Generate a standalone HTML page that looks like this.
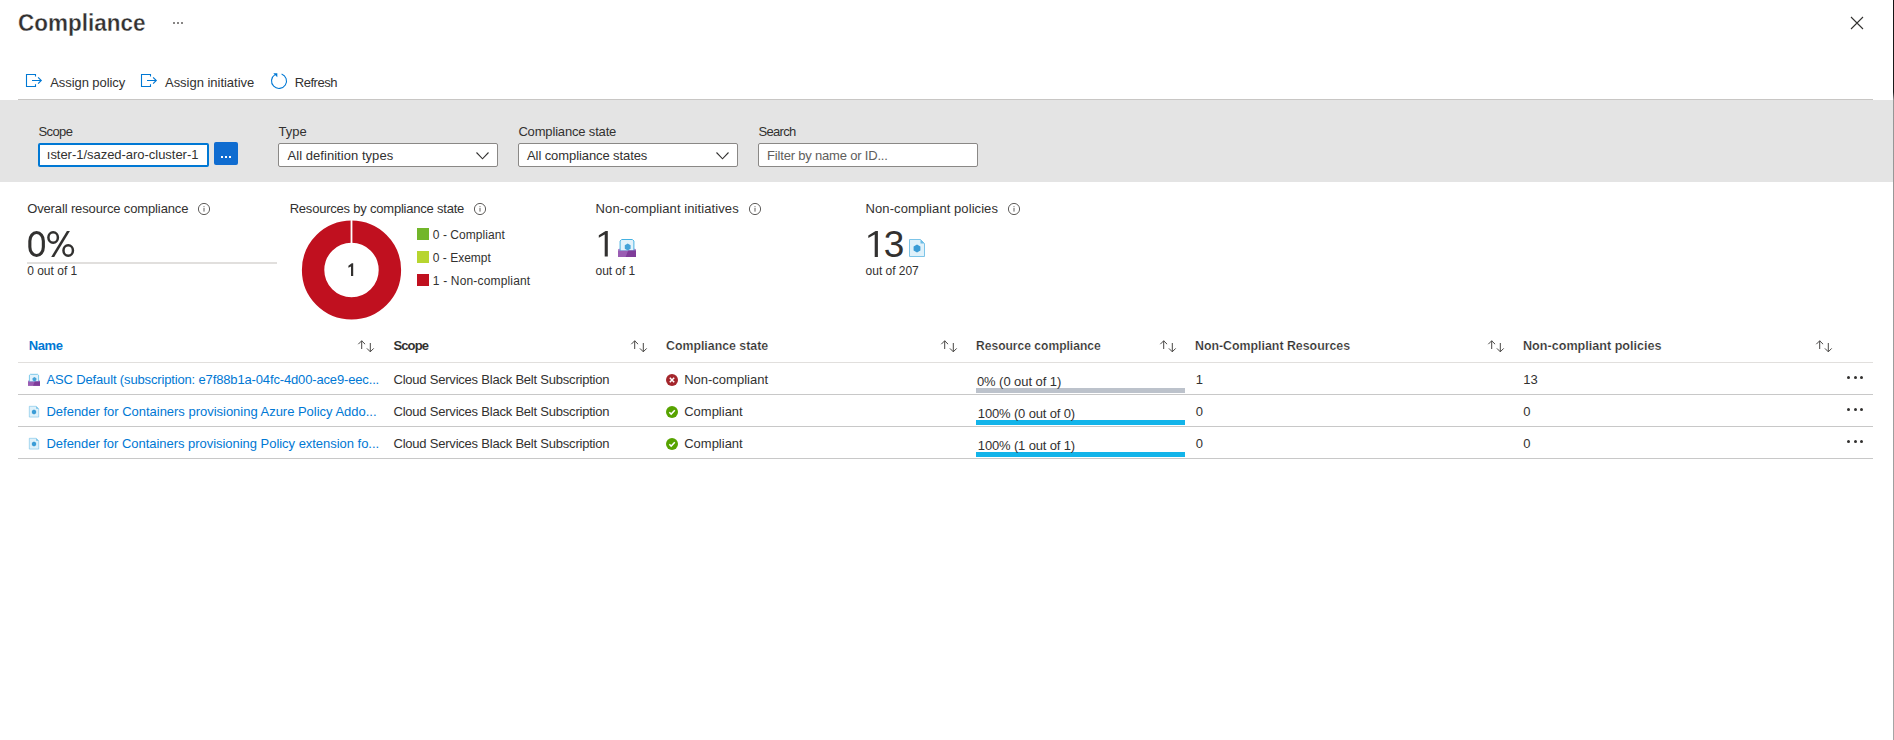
<!DOCTYPE html>
<html><head><meta charset="utf-8">
<style>
html,body{margin:0;padding:0;background:#fff;}
body{width:1894px;height:740px;position:relative;overflow:hidden;font-family:"Liberation Sans",sans-serif;color:#323130;}
.a{position:absolute;white-space:nowrap;line-height:1;}
.b{position:absolute;}
svg{position:absolute;overflow:visible;}
</style></head>
<body>
<!-- title dots -->
<div class="b" style="left:173px;top:22px;width:2px;height:2px;background:#605e5c;border-radius:1px;"></div>
<div class="b" style="left:177px;top:22px;width:2px;height:2px;background:#605e5c;border-radius:1px;"></div>
<div class="b" style="left:181px;top:22px;width:2px;height:2px;background:#605e5c;border-radius:1px;"></div>
<!-- close -->
<svg style="left:1850px;top:16px" width="14" height="14" viewBox="0 0 14 14"><path d="M1 1L13 13M13 1L1 13" stroke="#323130" stroke-width="1.1" fill="none"/></svg>
<!-- right edge -->
<div class="b" style="left:1893px;top:0;width:1px;height:740px;background:linear-gradient(#141414 0,#1a1a1a 92px,#959595 100px,#a5a5a5 740px);"></div>

<!-- toolbar icons -->
<svg style="left:24px;top:70px" width="20" height="20" viewBox="0 0 20 20"><path d="M11.5 6.6V4.5H2.5V16.5H11.5V14.3M8 10.5H17.2M14.1 7.3L17.3 10.5L14.1 13.7" stroke="#0078d4" stroke-width="1.1" fill="none"/></svg>
<svg style="left:139px;top:70px" width="20" height="20" viewBox="0 0 20 20"><path d="M11.5 6.6V4.5H2.5V16.5H11.5V14.3M8 10.5H17.2M14.1 7.3L17.3 10.5L14.1 13.7" stroke="#0078d4" stroke-width="1.1" fill="none"/></svg>
<svg style="left:269px;top:71px" width="20" height="20" viewBox="0 0 20 20"><path d="M12.6 2.9A7.5 7.5 0 1 1 6 3.6" stroke="#0078d4" stroke-width="1.1" fill="none"/><path d="M4.3 2.2H8.3V6.2Z" fill="#0078d4"/></svg>

<div class="b" style="left:18px;top:99px;width:1855px;height:1px;background:#c8c6c4;"></div>
<!-- filter panel -->
<div class="b" style="left:0;top:100px;width:1893px;height:82px;background:#e4e4e4;"></div>
<!-- scope input -->
<div class="b" style="left:38px;top:143px;width:167px;height:20px;border:2px solid #0078d4;border-radius:2px;background:#fff;"></div>
<div class="b" style="left:214px;top:142px;width:24px;height:23px;background:#0f6cd0;border-radius:2px;"></div>
<div class="b" style="left:221px;top:156px;width:2px;height:2px;background:#fff;"></div>
<div class="b" style="left:225px;top:156px;width:2px;height:2px;background:#fff;"></div>
<div class="b" style="left:229px;top:156px;width:2px;height:2px;background:#fff;"></div>
<!-- dropdowns -->
<div class="b" style="left:278px;top:143px;width:218px;height:22px;border:1px solid #8a8886;border-radius:2px;background:#fff;"></div>
<svg style="left:476px;top:152px" width="13" height="8" viewBox="0 0 13 8"><path d="M0.5 0.5L6.5 6.8L12.5 0.5" stroke="#323130" stroke-width="1.1" fill="none"/></svg>
<div class="b" style="left:518px;top:143px;width:218px;height:22px;border:1px solid #8a8886;border-radius:2px;background:#fff;"></div>
<svg style="left:716px;top:152px" width="13" height="8" viewBox="0 0 13 8"><path d="M0.5 0.5L6.5 6.8L12.5 0.5" stroke="#323130" stroke-width="1.1" fill="none"/></svg>
<div class="b" style="left:758px;top:143px;width:218px;height:22px;border:1px solid #8a8886;border-radius:2px;background:#fff;"></div>

<!-- metrics -->
<!-- info icons -->
<svg style="left:197px;top:202px" width="14" height="14" viewBox="0 0 14 14"><circle cx="7" cy="7" r="5.6" stroke="#605e5c" stroke-width="1" fill="none"/><rect x="6.5" y="6" width="1" height="3.6" fill="#605e5c"/><rect x="6.5" y="4.2" width="1" height="1" fill="#605e5c"/></svg>
<svg style="left:473px;top:202px" width="14" height="14" viewBox="0 0 14 14"><circle cx="7" cy="7" r="5.6" stroke="#605e5c" stroke-width="1" fill="none"/><rect x="6.5" y="6" width="1" height="3.6" fill="#605e5c"/><rect x="6.5" y="4.2" width="1" height="1" fill="#605e5c"/></svg>
<svg style="left:748px;top:202px" width="14" height="14" viewBox="0 0 14 14"><circle cx="7" cy="7" r="5.6" stroke="#605e5c" stroke-width="1" fill="none"/><rect x="6.5" y="6" width="1" height="3.6" fill="#605e5c"/><rect x="6.5" y="4.2" width="1" height="1" fill="#605e5c"/></svg>
<svg style="left:1007px;top:202px" width="14" height="14" viewBox="0 0 14 14"><circle cx="7" cy="7" r="5.6" stroke="#605e5c" stroke-width="1" fill="none"/><rect x="6.5" y="6" width="1" height="3.6" fill="#605e5c"/><rect x="6.5" y="4.2" width="1" height="1" fill="#605e5c"/></svg>
<div class="b" style="left:27px;top:262px;width:250px;height:2px;background:#e1dfdd;"></div>
<!-- donut -->
<svg style="left:301px;top:220px" width="101" height="101" viewBox="0 0 101 101"><circle cx="50.5" cy="50" r="38.4" stroke="#c0101f" stroke-width="22.4" fill="none"/><rect x="49.6" y="0" width="1.8" height="24" fill="#fff"/></svg>
<div class="b" style="left:417px;top:228px;width:12px;height:12px;background:#72b62a;"></div>
<div class="b" style="left:417px;top:251px;width:12px;height:12px;background:#b7d52f;"></div>
<div class="b" style="left:417px;top:274px;width:12px;height:12px;background:#c0101f;"></div>
<!-- initiative icon -->
<svg style="left:618px;top:239px" width="18" height="18" viewBox="0 0 18 18" preserveAspectRatio="none">
<path d="M0 10.2L1.2 9.8H16.8L18 10.2V18H0Z" fill="#b585c9"/>
<path d="M3.6 0.5H14.4L15.9 2V12H2.1V2Z" fill="#e2f2fb" stroke="#45b1e1" stroke-width="1"/>
<path d="M9.7 4.6L12.6 6.3V9.7L9.7 11.4L6.8 9.7V6.3Z" fill="#43a2d8"/>
<path d="M0 11.6H18V18H0Z" fill="#9a5db3"/>
<path d="M7.6 18L10.2 11.6H18V18Z" fill="#7f3c99"/>
</svg>
<!-- policy icon -->
<svg style="left:909px;top:239px" width="16" height="18" viewBox="0 0 16 18" preserveAspectRatio="none">
<path d="M0.5 0.5H11.5L15.5 4.5V17.5H0.5Z" fill="#dff1fa" stroke="#7cc4e8" stroke-width="1"/>
<path d="M11.5 0.5V4.5H15.5Z" fill="#6cbde6"/>
<path d="M8 5.6L11.4 7.6V11.4L8 13.4L4.6 11.4V7.6Z" fill="#3b9cd6"/>
</svg>

<svg style="left:0;top:0" width="1894" height="740" viewBox="0 0 1894 740">
<rect x="29.85" y="232.45" width="13.5" height="23.1" rx="6.75" ry="8.5" stroke="#323130" stroke-width="3.1" fill="none"/>
<ellipse cx="53.15" cy="237.45" rx="4.75" ry="5.25" stroke="#323130" stroke-width="2.5" fill="none"/>
<ellipse cx="68.2" cy="250.55" rx="4.75" ry="5.25" stroke="#323130" stroke-width="2.5" fill="none"/>
<path d="M51.2 256.9H54.2L69.9 231.1H66.9Z" fill="#323130"/>
<path d="M607.8 230.9V256.6H604.7V234.6L598.8 237.8V235.3L605.6 230.9Z" fill="#323130"/>
<path d="M877.9 230.9V256.9H874.7V234.6L868.3 238V235.6L875.6 230.9Z" fill="#323130"/>
<path d="M353.2 263.3V275.9H351V266.4L348.4 267.8V265.7L351.8 263.3Z" fill="#323130"/>
</svg>
<!-- table -->
<div class="b" style="left:18px;top:362px;width:1855px;height:1px;background:#e1dfdd;"></div>
<div class="b" style="left:18px;top:394px;width:1855px;height:1px;background:#c8c8c8;"></div>
<div class="b" style="left:18px;top:426px;width:1855px;height:1px;background:#c8c8c8;"></div>
<div class="b" style="left:18px;top:458px;width:1855px;height:1px;background:#c8c8c8;"></div>
<svg style="left:358px;top:340px" width="17" height="13" viewBox="0 0 17 13"><path d="M3.7 0.8V9M0.3 4.2L3.7 0.8L7.1 4.2M12.3 3V11.8M8.9 8.4L12.3 11.8L15.7 8.4" stroke="#484644" stroke-width="1" fill="none"/></svg>
<svg style="left:631px;top:340px" width="17" height="13" viewBox="0 0 17 13"><path d="M3.7 0.8V9M0.3 4.2L3.7 0.8L7.1 4.2M12.3 3V11.8M8.9 8.4L12.3 11.8L15.7 8.4" stroke="#484644" stroke-width="1" fill="none"/></svg>
<svg style="left:941px;top:340px" width="17" height="13" viewBox="0 0 17 13"><path d="M3.7 0.8V9M0.3 4.2L3.7 0.8L7.1 4.2M12.3 3V11.8M8.9 8.4L12.3 11.8L15.7 8.4" stroke="#484644" stroke-width="1" fill="none"/></svg>
<svg style="left:1160px;top:340px" width="17" height="13" viewBox="0 0 17 13"><path d="M3.7 0.8V9M0.3 4.2L3.7 0.8L7.1 4.2M12.3 3V11.8M8.9 8.4L12.3 11.8L15.7 8.4" stroke="#484644" stroke-width="1" fill="none"/></svg>
<svg style="left:1488px;top:340px" width="17" height="13" viewBox="0 0 17 13"><path d="M3.7 0.8V9M0.3 4.2L3.7 0.8L7.1 4.2M12.3 3V11.8M8.9 8.4L12.3 11.8L15.7 8.4" stroke="#484644" stroke-width="1" fill="none"/></svg>
<svg style="left:1816px;top:340px" width="17" height="13" viewBox="0 0 17 13"><path d="M3.7 0.8V9M0.3 4.2L3.7 0.8L7.1 4.2M12.3 3V11.8M8.9 8.4L12.3 11.8L15.7 8.4" stroke="#484644" stroke-width="1" fill="none"/></svg>
<svg style="left:666px;top:374px" width="12" height="12" viewBox="0 0 12 12"><circle cx="6" cy="6" r="6" fill="#a4262c"/><path d="M3.8 3.8L8.2 8.2M8.2 3.8L3.8 8.2" stroke="#fff" stroke-width="1.5"/></svg>
<svg style="left:666px;top:406px" width="12" height="12" viewBox="0 0 12 12"><circle cx="6" cy="6" r="6" fill="#57a300"/><path d="M3.3 6.2L5.2 8.1L8.8 4.3" stroke="#fff" stroke-width="1.5" fill="none"/></svg>
<svg style="left:666px;top:438px" width="12" height="12" viewBox="0 0 12 12"><circle cx="6" cy="6" r="6" fill="#57a300"/><path d="M3.3 6.2L5.2 8.1L8.8 4.3" stroke="#fff" stroke-width="1.5" fill="none"/></svg>
<svg style="left:28px;top:374.2px" width="12" height="11.8" viewBox="0 0 18 18" preserveAspectRatio="none">
<path d="M0 10.2L1.2 9.8H16.8L18 10.2V18H0Z" fill="#b585c9"/>
<path d="M3.6 0.5H14.4L15.9 2V12H2.1V2Z" fill="#e2f2fb" stroke="#45b1e1" stroke-width="1"/>
<path d="M9.7 4.6L12.6 6.3V9.7L9.7 11.4L6.8 9.7V6.3Z" fill="#43a2d8"/>
<path d="M0 11.6H18V18H0Z" fill="#9a5db3"/>
<path d="M7.6 18L10.2 11.6H18V18Z" fill="#7f3c99"/>
</svg>
<svg style="left:29px;top:406.4px" width="10" height="11.4" viewBox="0 0 16 18" preserveAspectRatio="none">
<path d="M0.5 0.5H11.5L15.5 4.5V17.5H0.5Z" fill="#dff1fa" stroke="#7cc4e8" stroke-width="1"/>
<path d="M11.5 0.5V4.5H15.5Z" fill="#6cbde6"/>
<path d="M8 5.6L11.4 7.6V11.4L8 13.4L4.6 11.4V7.6Z" fill="#3b9cd6"/>
</svg>
<svg style="left:29px;top:438.4px" width="10" height="11.4" viewBox="0 0 16 18" preserveAspectRatio="none">
<path d="M0.5 0.5H11.5L15.5 4.5V17.5H0.5Z" fill="#dff1fa" stroke="#7cc4e8" stroke-width="1"/>
<path d="M11.5 0.5V4.5H15.5Z" fill="#6cbde6"/>
<path d="M8 5.6L11.4 7.6V11.4L8 13.4L4.6 11.4V7.6Z" fill="#3b9cd6"/>
</svg>
<div class="b" style="left:1847px;top:376.0px;width:3px;height:3px;border-radius:50%;background:#323130;"></div><div class="b" style="left:1853.5px;top:376.0px;width:3px;height:3px;border-radius:50%;background:#323130;"></div><div class="b" style="left:1860px;top:376.0px;width:3px;height:3px;border-radius:50%;background:#323130;"></div>
<div class="b" style="left:1847px;top:408.0px;width:3px;height:3px;border-radius:50%;background:#323130;"></div><div class="b" style="left:1853.5px;top:408.0px;width:3px;height:3px;border-radius:50%;background:#323130;"></div><div class="b" style="left:1860px;top:408.0px;width:3px;height:3px;border-radius:50%;background:#323130;"></div>
<div class="b" style="left:1847px;top:440.0px;width:3px;height:3px;border-radius:50%;background:#323130;"></div><div class="b" style="left:1853.5px;top:440.0px;width:3px;height:3px;border-radius:50%;background:#323130;"></div><div class="b" style="left:1860px;top:440.0px;width:3px;height:3px;border-radius:50%;background:#323130;"></div>
<div class="b" style="left:976px;top:388px;width:209px;height:5px;background:#bcc2cb;"></div>
<div class="b" style="left:976px;top:420px;width:209px;height:5px;background:#12b4ea;"></div>
<div class="b" style="left:976px;top:452px;width:209px;height:5px;background:#12b4ea;"></div>

<div class="a" style="left:18.3px;top:11.26px;font-size:24.5px;font-weight:700;transform:scaleX(0.918);transform-origin:0 0;-webkit-text-stroke:0.35px #fff;">Compliance</div>
<div class="a" style="left:50.2px;top:76.00px;font-size:13px;letter-spacing:-0.067px;">Assign policy</div>
<div class="a" style="left:165.0px;top:76.00px;font-size:13px;letter-spacing:-0.024px;">Assign initiative</div>
<div class="a" style="left:294.8px;top:76.00px;font-size:13px;letter-spacing:-0.490px;">Refresh</div>
<div class="a" style="left:38.4px;top:125.00px;font-size:13px;letter-spacing:-0.575px;">Scope</div>
<div class="a" style="left:278.6px;top:125.00px;font-size:13px;">Type</div>
<div class="a" style="left:518.4px;top:125.00px;font-size:13px;letter-spacing:-0.166px;">Compliance state</div>
<div class="a" style="left:758.4px;top:125.00px;font-size:13px;letter-spacing:-0.667px;">Search</div>
<div class="a" style="left:46.8px;top:148.00px;font-size:13px;letter-spacing:-0.032px;">ıster-1/sazed-aro-cluster-1</div>
<div class="a" style="left:287.5px;top:149.00px;font-size:13px;letter-spacing:0.046px;">All definition types</div>
<div class="a" style="left:527.0px;top:149.00px;font-size:13px;letter-spacing:-0.087px;">All compliance states</div>
<div class="a" style="left:767.1px;top:149.00px;font-size:13px;color:#605e5c;letter-spacing:-0.191px;">Filter by name or ID...</div>
<div class="a" style="left:27.2px;top:202.30px;font-size:13px;letter-spacing:-0.135px;">Overall resource compliance</div>
<div class="a" style="left:289.7px;top:202.30px;font-size:13px;letter-spacing:-0.216px;">Resources by compliance state</div>
<div class="a" style="left:595.6px;top:202.30px;font-size:13px;letter-spacing:0.092px;">Non-compliant initiatives</div>
<div class="a" style="left:865.6px;top:202.30px;font-size:13px;letter-spacing:0.074px;">Non-compliant policies</div>
<div class="a" style="left:883.8px;top:225.88px;font-size:37px;">3</div>
<div class="a" style="left:27.2px;top:264.84px;font-size:12px;">0 out of 1</div>
<div class="a" style="left:595.6px;top:264.84px;font-size:12px;letter-spacing:-0.079px;">out of 1</div>
<div class="a" style="left:865.6px;top:264.84px;font-size:12px;letter-spacing:-0.029px;">out of 207</div>
<div class="a" style="left:432.8px;top:228.84px;font-size:12px;letter-spacing:0.056px;">0 - Compliant</div>
<div class="a" style="left:432.8px;top:251.84px;font-size:12px;">0 - Exempt</div>
<div class="a" style="left:432.8px;top:275.04px;font-size:12px;letter-spacing:0.169px;">1 - Non-compliant</div>
<div class="a" style="left:28.7px;top:339.00px;font-size:13px;font-weight:700;color:#0078d4;letter-spacing:-0.355px;">Name</div>
<div class="a" style="left:393.5px;top:339.00px;font-size:13px;font-weight:700;letter-spacing:-0.903px;">Scope</div>
<div class="a" style="left:666.3px;top:339.00px;font-size:13px;font-weight:700;transform:scaleX(0.9484);transform-origin:0 0;-webkit-text-stroke:0.2px #fff;">Compliance state</div>
<div class="a" style="left:976.4px;top:339.00px;font-size:13px;font-weight:700;transform:scaleX(0.9279);transform-origin:0 0;-webkit-text-stroke:0.2px #fff;">Resource compliance</div>
<div class="a" style="left:1195.0px;top:339.00px;font-size:13px;font-weight:700;transform:scaleX(0.9500);transform-origin:0 0;-webkit-text-stroke:0.2px #fff;">Non-Compliant Resources</div>
<div class="a" style="left:1523.0px;top:339.00px;font-size:13px;font-weight:700;transform:scaleX(0.9690);transform-origin:0 0;-webkit-text-stroke:0.2px #fff;">Non-compliant policies</div>
<div class="a" style="left:46.5px;top:373.00px;font-size:13px;color:#0078d4;letter-spacing:-0.149px;">ASC Default (subscription: e7f88b1a-04fc-4d00-ace9-eec...</div>
<div class="a" style="left:393.5px;top:373.00px;font-size:13px;letter-spacing:-0.216px;">Cloud Services Black Belt Subscription</div>
<div class="a" style="left:684.2px;top:373.00px;font-size:13px;">Non-compliant</div>
<div class="a" style="left:976.9px;top:374.50px;font-size:13px;letter-spacing:-0.059px;">0% (0 out of 1)</div>
<div class="a" style="left:1195.7px;top:373.00px;font-size:13px;">1</div>
<div class="a" style="left:1523.3px;top:373.00px;font-size:13px;">13</div>
<div class="a" style="left:46.5px;top:405.00px;font-size:13px;color:#0078d4;letter-spacing:-0.017px;">Defender for Containers provisioning Azure Policy Addo...</div>
<div class="a" style="left:393.5px;top:405.00px;font-size:13px;letter-spacing:-0.216px;">Cloud Services Black Belt Subscription</div>
<div class="a" style="left:684.2px;top:405.00px;font-size:13px;">Compliant</div>
<div class="a" style="left:977.8px;top:406.50px;font-size:13px;letter-spacing:-0.149px;">100% (0 out of 0)</div>
<div class="a" style="left:1195.7px;top:405.00px;font-size:13px;">0</div>
<div class="a" style="left:1523.3px;top:405.00px;font-size:13px;">0</div>
<div class="a" style="left:46.5px;top:437.00px;font-size:13px;color:#0078d4;letter-spacing:-0.034px;">Defender for Containers provisioning Policy extension fo...</div>
<div class="a" style="left:393.5px;top:437.00px;font-size:13px;letter-spacing:-0.216px;">Cloud Services Black Belt Subscription</div>
<div class="a" style="left:684.2px;top:437.00px;font-size:13px;">Compliant</div>
<div class="a" style="left:977.8px;top:438.50px;font-size:13px;letter-spacing:-0.149px;">100% (1 out of 1)</div>
<div class="a" style="left:1195.7px;top:437.00px;font-size:13px;">0</div>
<div class="a" style="left:1523.3px;top:437.00px;font-size:13px;">0</div>
</body></html>
